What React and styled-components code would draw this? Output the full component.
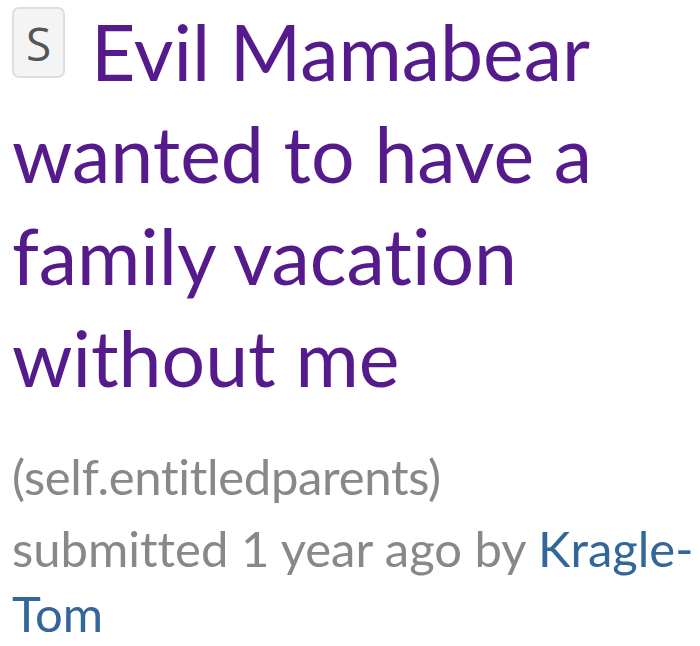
import React from 'react';
import styled, { createGlobalStyle } from 'styled-components';

const GlobalStyle = createGlobalStyle`
  body {
    margin: 0;
    background: #ffffff;
    font-family: Lato, "Open Sans", sans-serif;
    font-variant-ligatures: none;
  }
`

const Entry = styled.div`
  padding: 0 2px 0 12px;
`

const Title = styled.p`
  margin: 0;
  width: 620px;
  font-size: 77px;
  line-height: 102px;
`

const Badge = styled.span`
  display: inline-flex;
  align-items: center;
  justify-content: center;
  vertical-align: top;
  box-sizing: border-box;
  width: 53px;
  height: 71px;
  margin: 7px 26px 0 0;
  border: 2px solid #dedede;
  border-radius: 7px;
  background: #f4f4f4;
  color: #555;
  font-family: "Open Sans", sans-serif;
  font-size: 46px;
  line-height: 1;
`

const TitleLink = styled.a`
  color: #551a8b;
  text-decoration: none;
`

const Domain = styled.span`
  display: block;
  margin-top: 36px;
  color: #888;
  font-size: 49px;
  line-height: 65px;
  letter-spacing: -0.3px;
`

const Tagline = styled.p`
  margin: 7px 0 0;
  color: #888;
  font-size: 49px;
  line-height: 65px;
`

const Author = styled.a`
  color: #369;
  text-decoration: none;
`

const App = () => {
  return (
    <>
      <GlobalStyle />
      <Entry>
        <Title>
          <Badge>S</Badge>
          <TitleLink href="#">Evil Mamabear wanted to have a family vacation without me</TitleLink>
        </Title>
        <Domain>(self.entitledparents)</Domain>
        <Tagline>
          submitted 1 year ago by <Author href="#">Kragle-Tom</Author>
        </Tagline>
      </Entry>
    </>
  )
}

export default App
